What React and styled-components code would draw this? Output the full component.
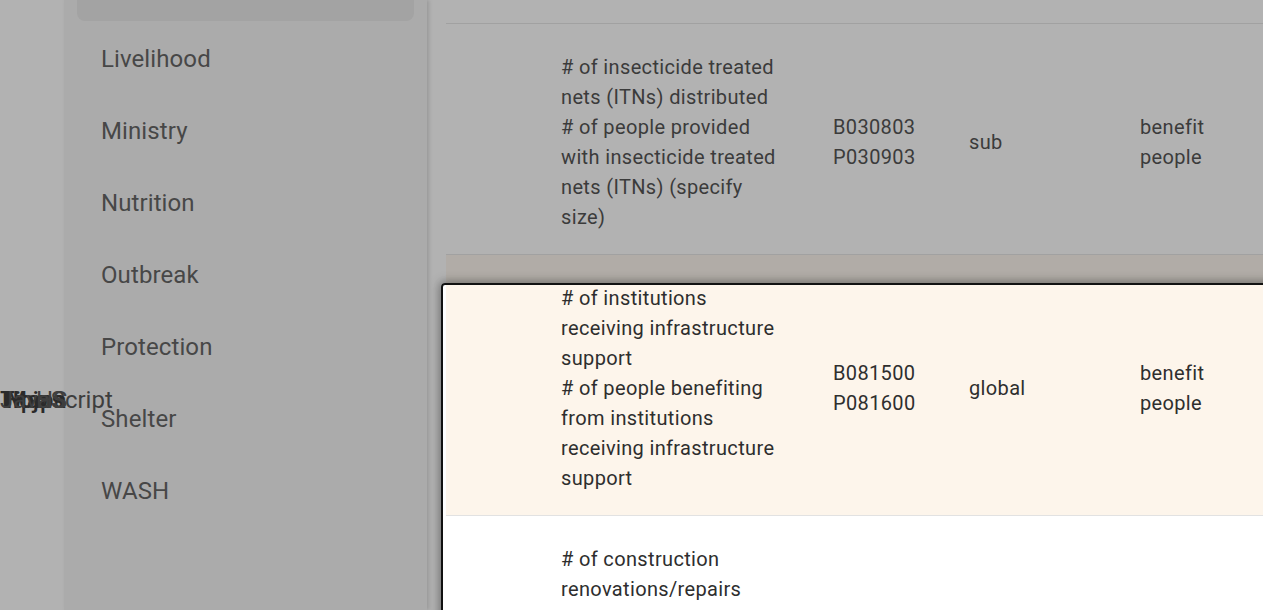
import React from 'react'
import styled, { createGlobalStyle } from 'styled-components'

const GlobalStyle = createGlobalStyle`
  html, body {
    margin: 0;
    padding: 0;
    height: 100%;
    overflow: hidden;
    background: #ffffff;
  }
  body {
    font-family: Roboto, "Noto Sans", "Liberation Sans", sans-serif;
    color: #2b2b2b;
  }
`

const Page = styled.div`
  display: flex;
  height: 610px;
  overflow: hidden;
`

const Rail = styled.div`
  position: relative;
  width: 64px;
  flex: none;
  background: #ffffff;
`

const StrayLabels = styled.div`
  position: absolute;
  left: 0;
  top: 386px;
  z-index: 2;
  white-space: nowrap;
`

const StrayLabel = styled.span`
  position: absolute;
  left: ${p => p.$x}px;
  top: 0;
  font-size: 24px;
  line-height: 28px;
  color: ${p => p.$dark ? '#111' : '#333'};
  font-weight: ${p => p.$dark ? 500 : 400};
`

const Sidebar = styled.nav`
  width: 363px;
  flex: none;
  background: #f3f3f3;
  box-shadow: 2px 0 4px rgba(0, 0, 0, 0.18);
  position: relative;
  z-index: 1;
`

const MenuList = styled.ul`
  list-style: none;
  margin: -47px 0 0;
  padding: 0 13px;
  display: flex;
  flex-direction: column;
  gap: 4px;
`

const MenuItem = styled.li`
  height: 68px;
  display: flex;
  align-items: center;
  padding-left: 24px;
  border-radius: 8px;
  font-size: 24px;
  letter-spacing: 0.1px;
  color: #444444;
  background: ${p => p.$active ? '#e4e4e4' : 'transparent'};
`

const Main = styled.main`
  flex: 1;
  padding: 23px 0 0 19px;
  background: #ffffff;
`

const Table = styled.div`
  border-top: 1px solid #e2e2e2;
`

const Row = styled.div`
  display: grid;
  grid-template-columns: 115px 272px 136px 171px 1fr;
  align-items: center;
  padding: 28px 0 22px;
  border-bottom: 1px solid #e2e2e2;
  background: ${p => p.$highlight ? '#fdf5eb' : '#ffffff'};
  font-size: 20px;
  line-height: 30px;
  letter-spacing: 0.35px;
  color: #2e2e2e;
`

const Cell = styled.div`
  min-width: 0;
`

const DescCell = styled(Cell)`
  max-width: 222px;
`

const Spotlight = styled.div`
  position: fixed;
  left: 441px;
  top: 283px;
  right: -20px;
  bottom: -20px;
  border: 2px solid #111111;
  border-radius: 4px;
  pointer-events: none;
  z-index: 10;
  box-shadow: 0 0 10px 2px rgba(0, 0, 0, 0.35), 0 0 0 9999px rgba(76, 76, 76, 0.43);
`

const menu = ['Health', 'Livelihood', 'Ministry', 'Nutrition', 'Outbreak', 'Protection', 'Shelter', 'WASH']

const rows = [
  {
    desc: [
      '# of insecticide treated nets (ITNs) distributed',
      '# of people provided with insecticide treated nets (ITNs) (specify size)'
    ],
    codes: ['B030803', 'P030903'],
    type: 'sub',
    unit: ['benefit', 'people']
  },
  {
    desc: [
      '# of institutions receiving infrastructure support',
      '# of people benefiting from institutions receiving infrastructure support'
    ],
    codes: ['B081500', 'P081600'],
    type: 'global',
    unit: ['benefit', 'people'],
    highlight: true
  },
  {
    desc: [
      '# of construction renovations/repairs across camps',
      '# of people benefiting from construction renovations/repairs'
    ],
    codes: ['B081700', 'P081800'],
    type: 'global',
    unit: ['benefit', 'people']
  }
]

const strayWords = [
  { text: 'Tipo', x: 0, dark: true },
  { text: 'Hojas', x: 2, dark: true },
  { text: 'Mapa', x: 6, dark: true },
  { text: 'HS', x: 36 },
  { text: 'JavaScript', x: 0 }
]

const Lines = ({ items }) => items.map((line, i) => <div key={i}>{line}</div>)

const App = () => (
  <>
    <GlobalStyle />
    <Page>
      <Rail>
        <StrayLabels>
          {strayWords.map(w => (
            <StrayLabel key={w.text} $x={w.x} $dark={w.dark}>
              {w.text}
            </StrayLabel>
          ))}
        </StrayLabels>
      </Rail>
      <Sidebar>
        <MenuList>
          {menu.map((item, i) => (
            <MenuItem key={item} $active={i === 0}>
              {item}
            </MenuItem>
          ))}
        </MenuList>
      </Sidebar>
      <Main>
        <Table>
          {rows.map(row => (
            <Row key={row.codes[0]} $highlight={row.highlight}>
              <Cell />
              <DescCell>
                <Lines items={row.desc} />
              </DescCell>
              <Cell>
                <Lines items={row.codes} />
              </Cell>
              <Cell>{row.type}</Cell>
              <Cell>
                <Lines items={row.unit} />
              </Cell>
            </Row>
          ))}
        </Table>
      </Main>
    </Page>
    <Spotlight />
  </>
)

export default App
